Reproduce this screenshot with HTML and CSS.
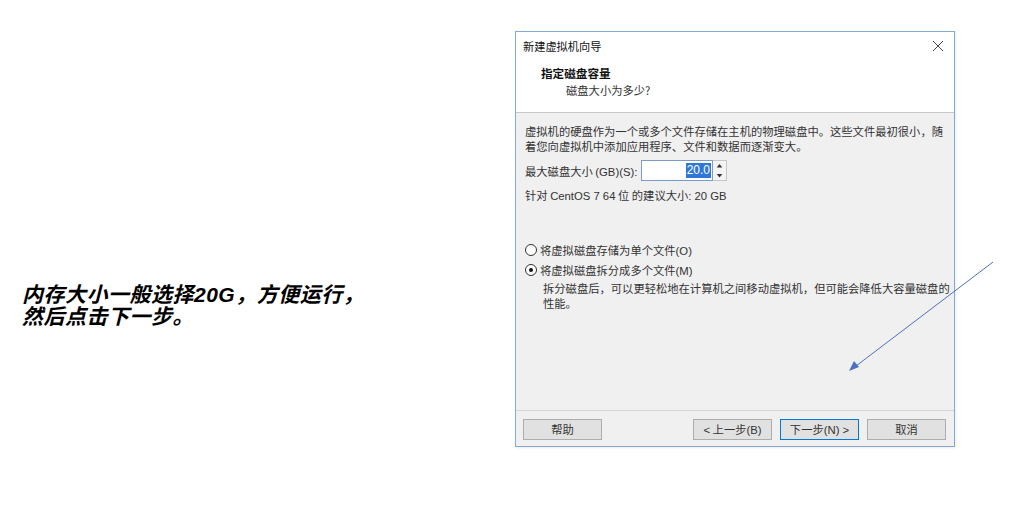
FILE: index.html
```html
<!DOCTYPE html>
<html lang="zh">
<head>
<meta charset="utf-8">
<title>新建虚拟机向导</title>
<link rel="stylesheet" href="styles.css">
</head>
<body>
<div class="page">
  <div class="note">
    <p>内存大小一般选择20G，方便运行，<br>然后点击下一步。</p>
  </div>
  <div class="dialog">
    <div class="titlebar">
      <span class="title">新建虚拟机向导</span>
      <svg class="close" width="12" height="12" viewBox="0 0 12 12"><path d="M1 1L11 11M11 1L1 11" stroke="#444" stroke-width="1" fill="none"/></svg>
    </div>
    <div class="header">
      <div class="h1">指定磁盘容量</div>
      <div class="h2">磁盘大小为多少?</div>
    </div>
    <div class="body">
      <p class="para">虚拟机的硬盘作为一个或多个文件存储在主机的物理磁盘中。这些文件最初很小，随<br>着您向虚拟机中添加应用程序、文件和数据而逐渐变大。</p>
      <div class="field">
        <span class="label">最大磁盘大小 <span class="lat">(GB)(S):</span></span>
        <div class="spin">
          <div class="input"><span class="sel">20.0</span></div>
          <div class="arrows">
            <svg width="14" height="10" viewBox="0 0 14 10"><path d="M4 7L7 3L10 7Z" fill="#333"/></svg>
            <svg width="14" height="10" viewBox="0 0 14 10"><path d="M4 3L7 7L10 3Z" fill="#333"/></svg>
          </div>
        </div>
      </div>
      <p class="rec">针对 <span class="lat">CentOS 7 64</span> 位 的建议大小<span class="lat">: 20 GB</span></p>
      <div class="radios">
        <div class="radio"><span class="circle"></span><span>将虚拟磁盘存储为单个文件<span class="lat">(O)</span></span></div>
        <div class="radio"><span class="circle on"></span><span>将虚拟磁盘拆分成多个文件<span class="lat">(M)</span></span></div>
        <p class="desc">拆分磁盘后，可以更轻松地在计算机之间移动虚拟机，但可能会降低大容量磁盘的<br>性能。</p>
      </div>
    </div>
    <div class="footer">
      <button class="btn">帮助</button>
      <div class="spacer"></div>
      <button class="btn"><span class="lat">&lt;</span> 上一步<span class="lat">(B)</span></button>
      <button class="btn primary">下一步<span class="lat">(N) &gt;</span></button>
      <button class="btn">取消</button>
    </div>
  </div>
</div>
<svg class="arrow" width="1033" height="524" viewBox="0 0 1033 524">
  <line x1="993" y1="262" x2="856" y2="366" stroke="#4a72c0" stroke-width="1"/>
  <path d="M849 371L854 361L859 367Z" fill="#4a72c0"/>
</svg>
</body>
</html>
```
FILE: styles.css
```css
html, body {
  margin: 0;
  padding: 0;
  background: #ffffff;
}
body {
  width: 1033px;
  height: 524px;
  overflow: hidden;
  position: relative;
  font-family: "Noto Sans CJK SC", "Noto Sans", sans-serif;
}
.page {
  display: flex;
  align-items: flex-start;
  padding: 31px 0 0 22px;
}
.note {
  width: 493px;
  flex: none;
  padding-top: 253px;
}
.note p {
  margin: 0;
  font-family: "Liberation Sans", "Noto Sans CJK SC", sans-serif;
  font-size: 21px;
  line-height: 22px;
  letter-spacing: 0.5px;
  font-style: italic;
  font-weight: 700;
  color: #000;
}
.dialog {
  width: 438px;
  height: 414px;
  flex: none;
  border: 1px solid #84a9d2;
  box-shadow: 1px 1px 2px rgba(0,0,0,0.08);
  display: flex;
  flex-direction: column;
  background: #f0f0f0;
  font-size: 11.3px;
  color: #222;
  white-space: nowrap;
}
.lat {
  font-family: "Liberation Sans", "Noto Sans", sans-serif;
}
.titlebar {
  height: 28px;
  background: #fff;
  display: flex;
  align-items: center;
  padding: 0 10px 0 7px;
}
.title {
  flex: 1;
  font-size: 11.2px;
  color: #111;
}
.header {
  height: 53px;
  background: #fff;
  border-bottom: 1px solid #c8c8c8;
  padding-top: 4px;
  box-sizing: border-box;
}
.h1 {
  padding-left: 25px;
  font-weight: 700;
  font-size: 11.6px;
  line-height: 18px;
  color: #111;
}
.h2 {
  padding-left: 50px;
  line-height: 17px;
  color: #333;
}
.body {
  flex: 1;
  padding: 11px 9px 0 9px;
  border-bottom: 1px solid #d6d6d6;
}
.para {
  margin: 0;
  line-height: 15px;
  color: #333;
}
.field {
  display: flex;
  align-items: center;
  margin-top: 6px;
  height: 21px;
}
.label {
  width: 116px;
  color: #333;
}
.spin {
  display: flex;
  height: 21px;
}
.input {
  width: 69px;
  height: 19px;
  border: 1px solid #7a9cc6;
  background: #fff;
  display: flex;
  justify-content: flex-end;
  align-items: center;
  padding-right: 1px;
}
.sel {
  background: #3078d8;
  color: #fff;
  font-family: "Liberation Sans", sans-serif;
  font-size: 12px;
  line-height: 15px;
  padding: 0 1px;
}
.arrows {
  width: 14px;
  display: flex;
  flex-direction: column;
  border: 1px solid #c6c6c6;
  border-left: none;
  background: #f4f4f4;
  box-sizing: border-box;
}
.arrows svg {
  display: block;
  width: 13px;
  height: 9.5px;
}
.rec {
  margin: 7px 0 0 0;
  line-height: 15px;
  color: #333;
}
.radios {
  margin-top: 38px;
}
.radio {
  display: flex;
  align-items: center;
  height: 15px;
  margin-bottom: 5px;
  gap: 3px;
  color: #333;
}
.circle {
  width: 12px;
  height: 12px;
  border: 1px solid #333;
  border-radius: 50%;
  background: #fff;
  box-sizing: border-box;
  position: relative;
}
.circle.on::after {
  content: "";
  position: absolute;
  left: 3px;
  top: 3px;
  width: 4px;
  height: 4px;
  border-radius: 50%;
  background: #111;
}
.desc {
  margin: -1px 0 0 18px;
  line-height: 15px;
  color: #333;
}
.footer {
  height: 35px;
  flex: none;
  display: flex;
  align-items: flex-start;
  gap: 8px;
  padding: 8px 8px 0 7px;
  box-sizing: border-box;
}
.spacer {
  flex: 1;
}
.btn {
  width: 79px;
  height: 21px;
  margin: 0;
  padding: 0;
  border: 1px solid #adadad;
  background: #e1e1e1;
  font-family: "Noto Sans CJK SC", "Noto Sans", sans-serif;
  font-size: 11.3px;
  color: #333;
  line-height: 17px;
}
.btn.primary {
  border-color: #0078d7;
}
.arrow {
  position: absolute;
  left: 0;
  top: 0;
  pointer-events: none;
}
```
